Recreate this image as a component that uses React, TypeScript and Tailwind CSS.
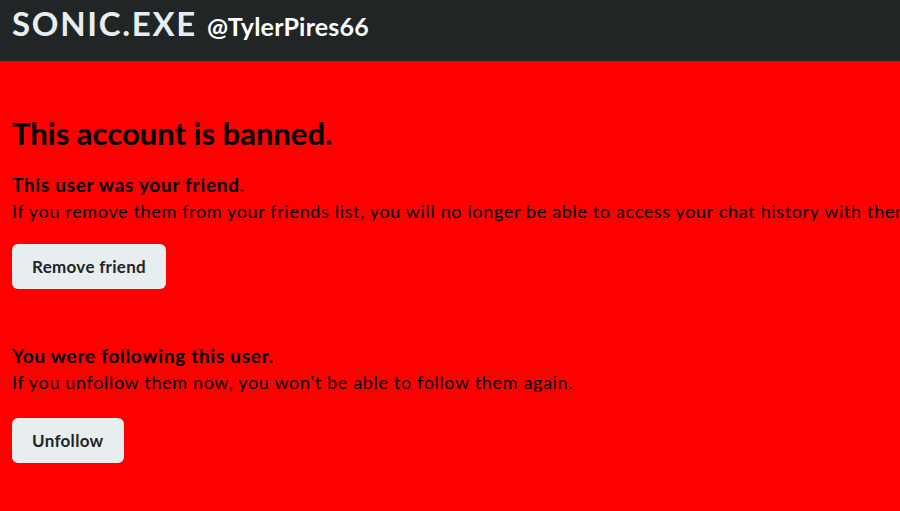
export default function App() {
  return (
    <div className="w-[900px] h-[511px] overflow-hidden bg-[#ff0000] font-['Lato',sans-serif] text-black">
      <header className="h-[61px] bg-[#212526] flex items-baseline gap-[10px] px-3">
        <span className="text-[33px] font-bold leading-[46px] text-[#e8eef0] tracking-[1.7px]">SONIC.EXE</span>
        <span className="text-[25px] font-bold leading-[46px] text-white tracking-[0.2px]">@TylerPires66</span>
      </header>

      <main className="px-3 pt-[52px]">
        <h1 className="text-[31px] font-bold leading-[40px]">This account is banned.</h1>

        <section className="mt-[19px]">
          <p className="text-[19px] font-bold leading-[26px] tracking-[0.7px]">This user was your friend.</p>
          <p className="text-[18px] leading-[26px] tracking-[0.65px] whitespace-nowrap">
            If you remove them from your friends list, you will no longer be able to access your chat history with them.
          </p>
          <button className="mt-[20px] h-[45px] px-[20px] rounded-md bg-[#e8eef0] text-[17px] font-bold text-[#222526] tracking-[0.3px]">
            Remove friend
          </button>
        </section>

        <section className="mt-[54px]">
          <p className="text-[19px] font-bold leading-[26px] tracking-[0.7px]">You were following this user.</p>
          <p className="text-[18px] leading-[26px] tracking-[0.65px] whitespace-nowrap">
            If you unfollow them now, you won't be able to follow them again.
          </p>
          <button className="mt-[23px] h-[45px] px-[20px] rounded-md bg-[#e8eef0] text-[17px] font-bold text-[#222526] tracking-[0.3px]">
            Unfollow
          </button>
        </section>
      </main>
    </div>
  );
}
